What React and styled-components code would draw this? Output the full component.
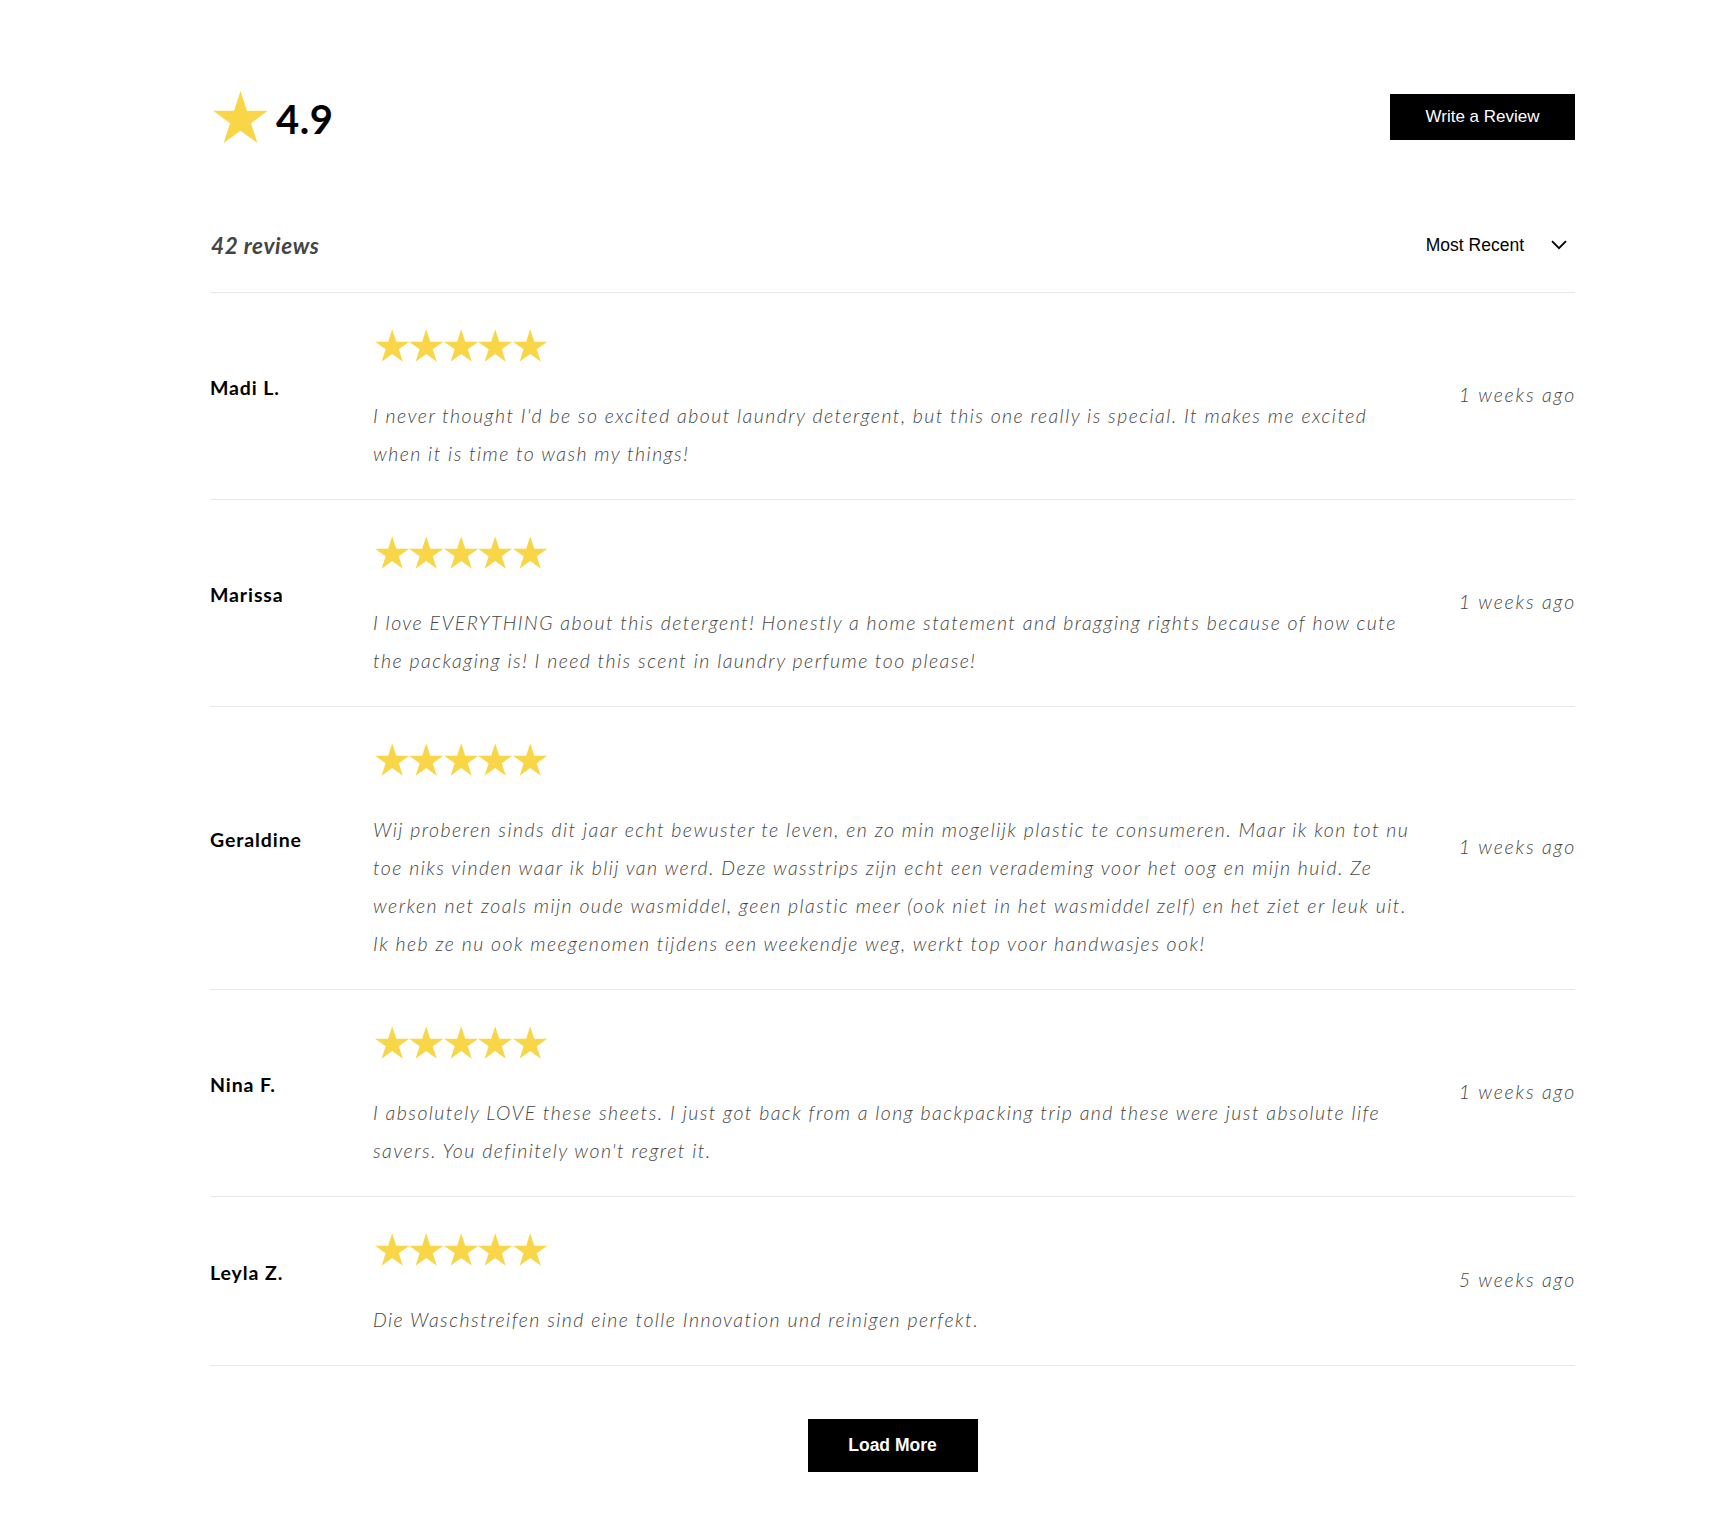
import React from 'react';
import styled, { createGlobalStyle } from 'styled-components';

const GlobalStyle = createGlobalStyle`
  html, body {
    margin: 0;
    padding: 0;
    background: #ffffff;
  }
  body {
    font-family: Lato, "Noto Sans", sans-serif;
    color: #000;
    -webkit-font-smoothing: antialiased;
  }
`;

const STAR_YELLOW = '#F9D648';

const Page = styled.main`
  width: 1365px;
  margin-left: 210px;
  padding-top: 90px;
  padding-bottom: 47px;
`;

const Header = styled.header`
  display: flex;
  justify-content: space-between;
  align-items: center;
  height: 54px;
`;

const Score = styled.div`
  display: flex;
  align-items: center;
  gap: 8px;
  margin-left: 3px;
`;

const ScoreValue = styled.span`
  font-family: Lato, "Noto Sans", sans-serif;
  font-size: 40px;
  font-weight: 700;
  line-height: 1;
  letter-spacing: 0.5px;
  padding-top: 4px;
`;

const BlackButton = styled.button`
  display: flex;
  align-items: center;
  justify-content: center;
  width: ${(p) => p.$w}px;
  height: ${(p) => p.$h}px;
  padding: 0;
  border: 0;
  border-radius: 0;
  background: #000;
  color: #fff;
  font-family: "Liberation Sans", Arial, sans-serif;
  font-size: ${(p) => p.$size}px;
  font-weight: ${(p) => (p.$bold ? 700 : 400)};
  cursor: pointer;
`;

const Toolbar = styled.div`
  display: flex;
  justify-content: space-between;
  align-items: center;
  margin-top: 54px;
  height: 94px;
  border-bottom: 1px solid #e6e6e6;
`;

const ReviewCount = styled.span`
  font-family: Lato, "Noto Sans", sans-serif;
  font-size: 22.5px;
  font-style: italic;
  font-weight: 700;
  color: #444;
  letter-spacing: 0.6px;
  padding-left: 1px;
`;

const SortSelect = styled.div`
  display: flex;
  align-items: center;
  gap: 27px;
  padding-right: 8px;
  font-family: "Liberation Sans", Arial, sans-serif;
  font-size: 17.5px;
  color: #000;
  cursor: pointer;
`;

const ReviewList = styled.section`
  display: flex;
  flex-direction: column;
`;

const Row = styled.article`
  display: grid;
  grid-template-columns: 163px 1fr auto;
  align-items: center;
  padding: 36px 0 26px;
  border-bottom: 1px solid #e8e8e8;
`;

const Name = styled.div`
  font-family: Lato, "Noto Sans", sans-serif;
  font-size: 19.5px;
  font-weight: 700;
  letter-spacing: 0.9px;
  color: #000;
  margin-bottom: 28px;
`;

const Body = styled.div`
  display: flex;
  flex-direction: column;
`;

const Stars = styled.div`
  display: flex;
  height: 33px;
  margin: 0 0 35px 2px;
`;

const Text = styled.p`
  margin: 0;
  font-family: Lato, "Noto Sans", sans-serif;
  font-size: 19.5px;
  font-style: italic;
  font-weight: 300;
  line-height: 38px;
  letter-spacing: 1.44px;
  color: #454545;
  white-space: nowrap;
`;

const DateLabel = styled.div`
  font-family: Lato, "Noto Sans", sans-serif;
  font-size: 19.5px;
  font-style: italic;
  font-weight: 300;
  letter-spacing: 1.8px;
  color: #454545;
  white-space: nowrap;
  text-align: right;
  margin-right: -1px;
  margin-bottom: 14px;
`;

const Footer = styled.div`
  display: flex;
  justify-content: center;
  padding-top: 53px;
`;

const StarIcon = ({ w, h }) => (
  <svg width={w} height={h} viewBox="0 0 100 95.1" aria-hidden="true">
    <polygon
      fill={STAR_YELLOW}
      points="50,0 61.8,36.3 100,36.3 69.1,58.8 80.9,95.1 50,72.6 19.1,95.1 30.9,58.8 0,36.3 38.2,36.3"
    />
  </svg>
);

const Chevron = () => (
  <svg width="16" height="10" viewBox="0 0 16 10" aria-hidden="true">
    <polyline points="1,1.2 8,8.2 15,1.2" fill="none" stroke="#000" strokeWidth="1.8" />
  </svg>
);

const reviews = [
  {
    name: 'Madi L.',
    date: '1 weeks ago',
    lines: [
      "I never thought I'd be so excited about laundry detergent, but this one really is special. It makes me excited",
      'when it is time to wash my things!',
    ],
  },
  {
    name: 'Marissa',
    date: '1 weeks ago',
    lines: [
      'I love EVERYTHING about this detergent! Honestly a home statement and bragging rights because of how cute',
      'the packaging is! I need this scent in laundry perfume too please!',
    ],
  },
  {
    name: 'Geraldine',
    date: '1 weeks ago',
    lines: [
      'Wij proberen sinds dit jaar echt bewuster te leven, en zo min mogelijk plastic te consumeren. Maar ik kon tot nu',
      'toe niks vinden waar ik blij van werd. Deze wasstrips zijn echt een verademing voor het oog en mijn huid. Ze',
      'werken net zoals mijn oude wasmiddel, geen plastic meer (ook niet in het wasmiddel zelf) en het ziet er leuk uit.',
      'Ik heb ze nu ook meegenomen tijdens een weekendje weg, werkt top voor handwasjes ook!',
    ],
  },
  {
    name: 'Nina F.',
    date: '1 weeks ago',
    lines: [
      'I absolutely LOVE these sheets. I just got back from a long backpacking trip and these were just absolute life',
      "savers. You definitely won't regret it.",
    ],
  },
  {
    name: 'Leyla Z.',
    date: '5 weeks ago',
    lines: ['Die Waschstreifen sind eine tolle Innovation und reinigen perfekt.'],
  },
];

export default function App() {
  return (
    <>
      <GlobalStyle />
      <Page>
        <Header>
          <Score>
            <StarIcon w={55} h={52} />
            <ScoreValue>4.9</ScoreValue>
          </Score>
          <BlackButton $w={185} $h={46} $size={17}>
            Write a Review
          </BlackButton>
        </Header>

        <Toolbar>
          <ReviewCount>42 reviews</ReviewCount>
          <SortSelect>
            <span>Most Recent</span>
            <Chevron />
          </SortSelect>
        </Toolbar>

        <ReviewList>
          {reviews.map((r) => (
            <Row key={r.name}>
              <Name>{r.name}</Name>
              <Body>
                <Stars>
                  {[0, 1, 2, 3, 4].map((i) => (
                    <StarIcon key={i} w={34.4} h={33} />
                  ))}
                </Stars>
                <Text>
                  {r.lines.map((line, i) => (
                    <React.Fragment key={i}>
                      {i > 0 && <br />}
                      {line}
                    </React.Fragment>
                  ))}
                </Text>
              </Body>
              <DateLabel>{r.date}</DateLabel>
            </Row>
          ))}
        </ReviewList>

        <Footer>
          <BlackButton $w={170} $h={53} $size={17.5} $bold>
            Load More
          </BlackButton>
        </Footer>
      </Page>
    </>
  );
}
